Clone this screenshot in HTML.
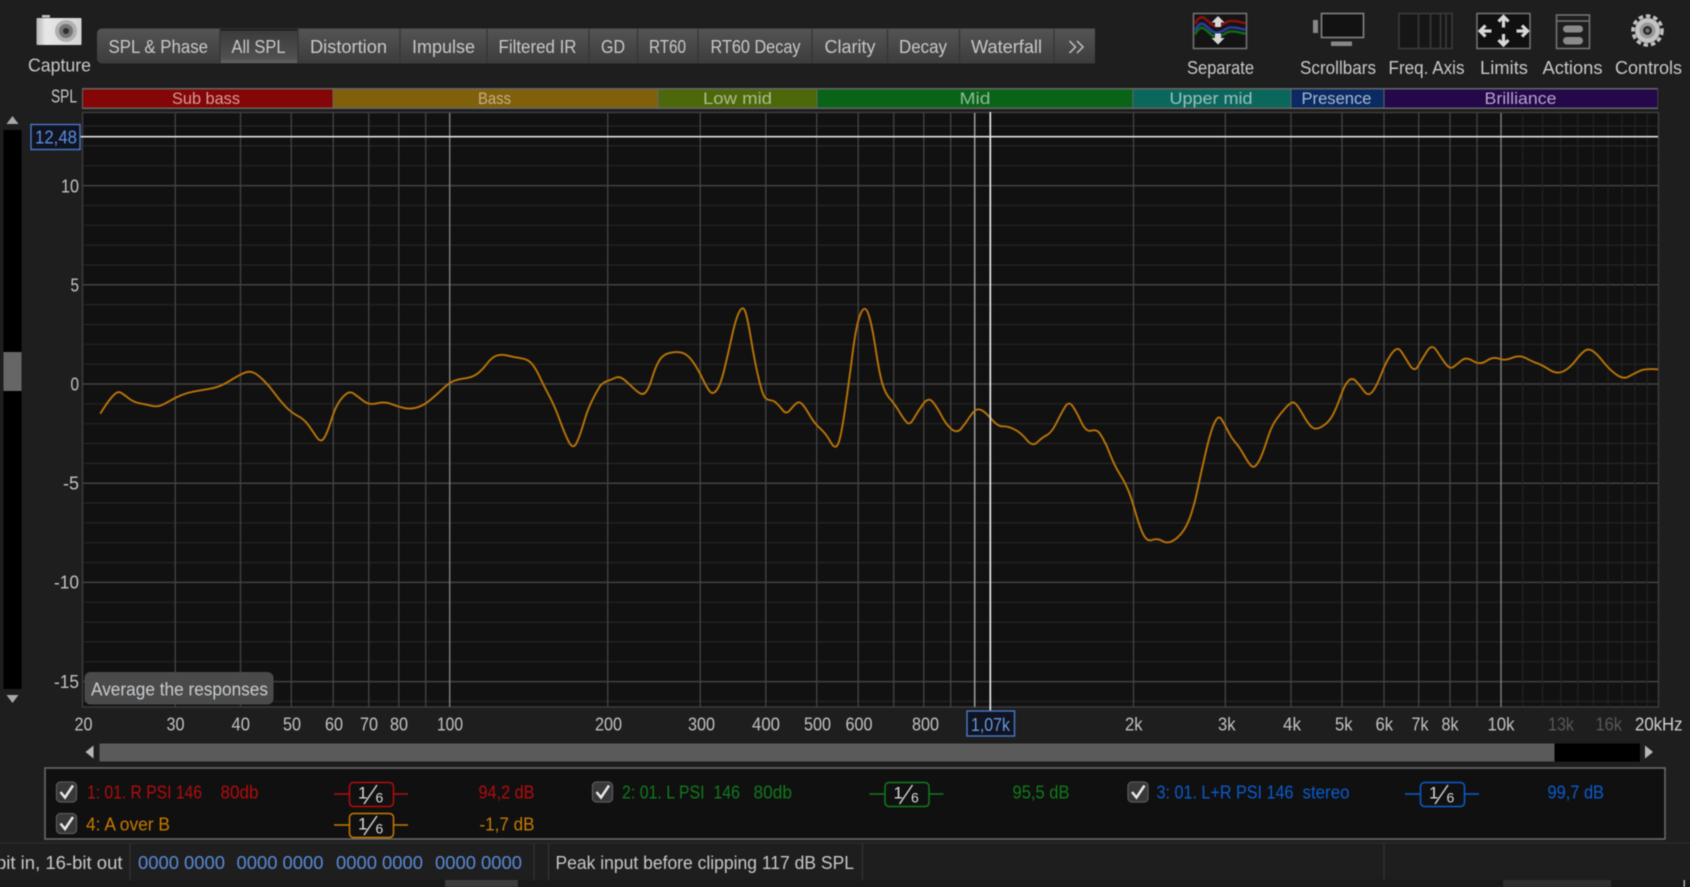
<!DOCTYPE html>
<html><head><meta charset="utf-8"><title>REW</title>
<style>
html,body{margin:0;padding:0;background:#1e1e1e;width:1690px;height:887px;overflow:hidden}
svg{display:block;filter:blur(.45px)}
text{font-family:"Liberation Sans",sans-serif;font-size:18px;fill:#c6c8ca}
.b{font-size:17px}
.f{fill:#c2c2c2}
</style></head><body>
<svg width="1690" height="887" viewBox="0 0 1690 887" xmlns="http://www.w3.org/2000/svg">
<defs>
<linearGradient id="tab" x1="0" y1="0" x2="0" y2="1"><stop offset="0" stop-color="#545454"/><stop offset="1" stop-color="#3c3c3c"/></linearGradient>
<linearGradient id="sel" x1="0" y1="0" x2="0" y2="1"><stop offset="0" stop-color="#3a3a3a"/><stop offset=".85" stop-color="#505050"/><stop offset="1" stop-color="#646464"/></linearGradient>
<linearGradient id="cam" x1="0" y1="0" x2="1" y2="0"><stop offset="0" stop-color="#b4b4b4"/><stop offset=".2" stop-color="#e8e8e8"/><stop offset="1" stop-color="#d4d4d4"/></linearGradient>
<clipPath id="plot"><rect x="82" y="113" width="1576" height="594"/></clipPath>
</defs>
<rect width="1690" height="887" fill="#1e1e1e"/>

<!-- Capture -->
<path d="M42 17.500v-2.500h8v2.500z" fill="#c0c0c0"/>
<rect x="36.500" y="18" width="45" height="27" rx="1" fill="url(#cam)"/>
<circle cx="66" cy="31" r="11" fill="#b0b0b0"/><circle cx="66" cy="31" r="7" fill="#747474"/><circle cx="66" cy="31" r="3" fill="#2a2e36"/>
<text x="28" y="71.500" textLength="63" lengthAdjust="spacingAndGlyphs">Capture</text>

<!-- Tabs -->
<path d="M102 28.500H1095V63.500H102a5 5 0 0 1-5-5V33.500a5 5 0 0 1 5-5z" fill="url(#tab)"/>
<rect x="220" y="29" width="78" height="34" fill="url(#sel)"/><rect x="220" y="29" width="78" height="1.500" fill="#161616"/>
<path d="M220 29v34M298 29v34M400 29v34M487 29v34M589 29v34M637.500 29v34M698 29v34M812 29v34M887.500 29v34M959.500 29v34M1054 29v34" stroke="#343434" stroke-width="1.200"/>
<text x="108.500" y="53" textLength="99.500" lengthAdjust="spacingAndGlyphs">SPL &amp; Phase</text>
<text x="231.500" y="53" textLength="54" lengthAdjust="spacingAndGlyphs">All SPL</text>
<text x="310" y="53" textLength="77" lengthAdjust="spacingAndGlyphs">Distortion</text>
<text x="412" y="53" textLength="63" lengthAdjust="spacingAndGlyphs">Impulse</text>
<text x="498.500" y="53" textLength="78" lengthAdjust="spacingAndGlyphs">Filtered IR</text>
<text x="601" y="53" textLength="24" lengthAdjust="spacingAndGlyphs">GD</text>
<text x="649" y="53" textLength="37" lengthAdjust="spacingAndGlyphs">RT60</text>
<text x="710.500" y="53" textLength="90" lengthAdjust="spacingAndGlyphs">RT60 Decay</text>
<text x="824.500" y="53" textLength="51" lengthAdjust="spacingAndGlyphs">Clarity</text>
<text x="899" y="53" textLength="48" lengthAdjust="spacingAndGlyphs">Decay</text>
<text x="971" y="53" textLength="71" lengthAdjust="spacingAndGlyphs">Waterfall</text>
<path d="M1069.500 41l6 6-6 6M1077 41l6 6-6 6" fill="none" stroke="#c0c0c0" stroke-width="1.500"/>

<!-- Separate icon -->
<rect x="1193.500" y="13.500" width="53" height="35" fill="#141414" stroke="#777" stroke-width="1.500"/>
<g fill="none" stroke-width="2.600">
<path d="M1195 28c3-6 6-8 9-6 5 3 8 9 14 8 6-1 9-6 15-5 5 0 9 2 13 2" stroke="#0f6a18" transform="translate(0,6.500)"/>
<path d="M1195 28c3-6 6-8 9-6 5 3 8 9 14 8 6-1 9-6 15-5 5 0 9 2 13 2" stroke="#2c3aa0" transform="translate(0,2.500)"/>
<path d="M1195 24c3-6 6-8 9-6 5 3 8 9 14 8 6-1 9-6 15-5 5 0 9 2 13 2" stroke="#8a0f10"/>
</g>
<path d="M1218 16l6.500 6.500h-3.500v4.500h-6v-4.500h-3.500zM1218 44.500l6.500-6.500h-3.500v-4.500h-6v4.500h-3.500z" fill="#d8d8d8"/>

<!-- Scrollbars icon -->
<rect x="1321.500" y="13.500" width="42" height="24" fill="#121212" stroke="#888" stroke-width="1.500"/>
<rect x="1313" y="20" width="5" height="13" fill="#888"/>
<rect x="1331" y="41.500" width="21" height="4.500" fill="#888"/>

<!-- Freq axis icon -->
<rect x="1399" y="13.500" width="53" height="35" fill="#161616" stroke="#3c3c3c" stroke-width="1.500"/>
<path d="M1418.500 13v35M1430.500 13v35M1440.500 13v35M1446 13v35" stroke="#3c3c3c" stroke-width="1.500"/>

<!-- Limits icon -->
<rect x="1477" y="13.500" width="53" height="35" fill="#101010" stroke="#777" stroke-width="1.500"/>
<g fill="none" stroke="#d8d8d8" stroke-width="3.200">
<path d="M1503.500 17.500v10M1498.500 21.500l5-5 5 5"/>
<path d="M1503.500 34v10M1498.500 40l5 5 5-5"/>
<path d="M1480.500 31h11M1485.500 25.500l-5.500 5.500 5.500 5.500"/>
<path d="M1516.500 31h11M1522 25.500l5.500 5.500-5.500 5.500"/>
</g>

<!-- Actions icon -->
<rect x="1556.500" y="15" width="33" height="33.500" fill="none" stroke="#777" stroke-width="1.500"/>
<path d="M1556 21h34" stroke="#777" stroke-width="1.500"/>
<rect x="1563" y="25.500" width="20" height="7" rx="3.500" fill="#8a8a8a"/>
<rect x="1563" y="37" width="20" height="7.500" rx="3.700" fill="#8a8a8a"/>

<!-- Gear icon -->
<circle cx="1647.500" cy="30.500" r="14.500" fill="none" stroke="#c0c0c0" stroke-width="3.500" stroke-dasharray="4.500 2.900"/>
<circle cx="1647.500" cy="30.500" r="12.500" fill="#c4c4c4"/>
<circle cx="1647.500" cy="30.500" r="8" fill="#999"/>
<circle cx="1647.500" cy="30.500" r="4.500" fill="#2a2a2a"/>
<circle cx="1647.500" cy="30.500" r="2" fill="#777"/>

<text x="1187" y="74" textLength="67" lengthAdjust="spacingAndGlyphs">Separate</text>
<text x="1300" y="74" textLength="76" lengthAdjust="spacingAndGlyphs">Scrollbars</text>
<text x="1388.500" y="74" textLength="76" lengthAdjust="spacingAndGlyphs">Freq. Axis</text>
<text x="1480" y="74" textLength="48" lengthAdjust="spacingAndGlyphs">Limits</text>
<text x="1542.500" y="74" textLength="60" lengthAdjust="spacingAndGlyphs">Actions</text>
<text x="1615" y="74" textLength="67" lengthAdjust="spacingAndGlyphs">Controls</text>

<!-- Band bar -->
<text x="51" y="102.500" textLength="26" lengthAdjust="spacingAndGlyphs">SPL</text>
<rect x="82" y="88" width="1576" height="21" fill="#666"/>
<rect x="83" y="89.500" width="249.500" height="18" fill="#850606"/>
<rect x="333.500" y="89.500" width="324" height="18" fill="#80600a"/>
<rect x="658.500" y="89.500" width="158" height="18" fill="#4c680a"/>
<rect x="817.500" y="89.500" width="315" height="18" fill="#0a6418"/>
<rect x="1133.500" y="89.500" width="157" height="18" fill="#0b665c"/>
<rect x="1291.500" y="89.500" width="92" height="18" fill="#0a2a62"/>
<rect x="1384.500" y="89.500" width="273" height="18" fill="#24084a"/>
<g>
<text class="b" x="172" y="104" textLength="68" lengthAdjust="spacingAndGlyphs" style="fill:#d49c9c">Sub bass</text>
<text class="b" x="478" y="104" textLength="33" lengthAdjust="spacingAndGlyphs" style="fill:#c4b088">Bass</text>
<text class="b" x="703" y="104" textLength="69" lengthAdjust="spacingAndGlyphs" style="fill:#aebc90">Low mid</text>
<text class="b" x="959.500" y="104" textLength="31" lengthAdjust="spacingAndGlyphs" style="fill:#90b898">Mid</text>
<text class="b" x="1169.500" y="104" textLength="83" lengthAdjust="spacingAndGlyphs" style="fill:#98c2bc">Upper mid</text>
<text class="b" x="1301.500" y="104" textLength="70" lengthAdjust="spacingAndGlyphs" style="fill:#a8b8d0">Presence</text>
<text class="b" x="1484.500" y="104" textLength="72" lengthAdjust="spacingAndGlyphs" style="fill:#b4a4c8">Brilliance</text>
</g>

<!-- Plot -->
<rect x="82.500" y="112.500" width="1576" height="594.500" fill="#111" stroke="#3c3c3c" stroke-width="1.500"/>
<path d="M83 126H1658M83 145.900H1658M83 165.700H1658M83 205.400H1658M83 225.300H1658M83 245.100H1658M83 265H1658M83 304.600H1658M83 324.500H1658M83 344.300H1658M83 364.200H1658M83 403.800H1658M83 423.700H1658M83 443.500H1658M83 463.400H1658M83 503H1658M83 522.900H1658M83 542.700H1658M83 562.600H1658M83 602.200H1658M83 622.100H1658M83 641.900H1658M83 661.800H1658M83 701.400H1658" stroke="#252525" stroke-width="1.200"/>
<path d="M83 185.600H1658M83 284.800H1658M83 384H1658M83 483.200H1658M83 582.400H1658M83 681.600H1658" stroke="#424242" stroke-width="1.500"/>
<path d="M1522.700 113V707M1542.500 113V707M1560.800 113V707M1577.700 113V707M1593.400 113V707M1608.100 113V707M1621.900 113V707M1634.900 113V707M1647.200 113V707" stroke="#242424" stroke-width="1.100"/>
<path d="M175.200 113V707M240.500 113V707M291.300 113V707M333.200 113V707M368.800 113V707M398.800 113V707M425.700 113V707M607.700 113V707M700.200 113V707M765.800 113V707M816.700 113V707M858.200 113V707M893.700 113V707M923.800 113V707M950.700 113V707M1133.500 113V707M1225.300 113V707M1291 113V707M1342 113V707M1384 113V707M1418.700 113V707M1450 113V707M1477 113V707" stroke="#444" stroke-width="1.300"/>
<path d="M449.700 113V707M1501 113V707" stroke="#808080" stroke-width="1.400"/>
<path d="M974.700 113V707" stroke="#a0a0a0" stroke-width="1.500"/>

<g clip-path="url(#plot)" fill="none" stroke="#b87408" stroke-width="1.900" stroke-linejoin="round" stroke-linecap="round">
<path vector-effect="non-scaling-stroke" transform="translate(0,280) scale(0.3827,0.3333)" d="M263,399 L274,379.500 Q285,360 296.500,346 Q308,332 316.500,338.500 Q325,345 337.500,356 Q350,367 365,370 Q380,373 395,377 Q410,381 420,376.500 Q430,372 444,362.500 Q458,353 474,345.500 Q490,338 507.500,334.500 Q525,331 545,327 Q565,323 577.500,316.500 Q590,310 607.500,297.500 Q625,285 638.500,278.500 Q652,272 663.500,278.500 Q675,285 690,302.500 Q705,320 717.500,340 Q730,360 745,378.500 Q760,397 777.500,407.500 Q795,418 805,434 Q815,450 826.500,470 Q838,490 846.500,475 Q855,460 865,422.500 Q875,385 885,367.500 Q895,350 905,341.500 Q915,333 925,341.500 Q935,350 950,363 Q965,376 985,370 Q1005,364 1022.500,372 Q1040,380 1055,384 Q1070,388 1087.500,383 Q1105,378 1122.500,361.500 Q1140,345 1157.500,326 Q1175,307 1187.500,302 Q1200,297 1217.500,294.500 Q1235,292 1247.500,281 Q1260,270 1272.500,251 Q1285,232 1297.500,227 Q1310,222 1327.500,227 Q1345,232 1362.500,235 Q1380,238 1390,251.500 Q1400,265 1410,290 Q1420,315 1435,347.500 Q1450,380 1462.500,420 Q1475,460 1486,485 Q1497,510 1506,490 Q1515,470 1527.500,420 Q1540,370 1568,318"/>
<path vector-effect="non-scaling-stroke" transform="translate(600,280) scale(0.3827,0.3333)" d="M0,318 L6,311.500 Q12,305 21,302 Q30,299 40,293.500 Q50,288 60,296.500 Q70,305 80,316.500 Q90,328 101,337.500 Q112,347 120,336 Q128,325 136.500,292.500 Q145,260 155,241 Q165,222 185,218 Q205,214 217.500,219.500 Q230,225 242.500,245 Q255,265 267.500,295 Q280,325 287.500,335 Q295,345 305,330 Q315,315 325,267.500 Q335,220 345,167.500 Q355,115 364,95.500 Q373,76 379,93 Q385,110 395,180 Q405,250 415,297.500 Q425,345 431,352.500 Q437,360 446,361 Q455,362 462.500,371 Q470,380 478.500,392 Q487,404 496,391 Q505,378 512.500,370.500 Q520,363 527.500,371.500 Q535,380 547.500,405 Q560,430 575,445 Q590,460 602.500,486 Q615,512 622.500,491 Q630,470 640,390 Q650,310 660,220 Q670,130 681,101 Q692,72 701,101 Q710,130 720,205 Q730,280 737.500,310 Q745,340 757.500,356 Q770,372 782.500,396 Q795,420 802.500,428 Q810,436 820,415.500 Q830,395 844,372.500 Q858,350 869,365 Q880,380 892.500,407.500 Q905,435 919,448 Q933,461 944,445.500 Q955,430 965,412.500 Q975,395 982.500,390 Q990,385 1000,392.500 Q1010,400 1025,420 Q1040,440 1052.500,439 Q1065,438 1082.500,448 Q1100,458 1115,479.500 Q1130,501 1142.500,487 Q1155,473 1167.500,465.500 Q1180,458 1192.500,429 Q1205,400 1215,381 Q1225,362 1235,378.500 Q1245,395 1257.500,426 Q1270,457 1284,452 Q1298,447 1306.500,461 Q1315,475 1321,492"/>
<path vector-effect="non-scaling-stroke" transform="translate(1100,320) scale(0.3762,0.3333)" d="M15,370 L27.500,405 Q40,440 54,465 Q68,490 76.500,515 Q85,540 95,580 Q105,620 115,643 Q125,666 138.500,660 Q152,654 167.500,664 Q183,674 204,654.500 Q225,635 237.500,597.500 Q250,560 260,505 Q270,450 282.500,390 Q295,330 305,307 Q315,284 322.500,297 Q330,310 340,332.500 Q350,355 360,367.500 Q370,380 382.500,405 Q395,430 402.500,438 Q410,446 420,428 Q430,410 442.500,365 Q455,320 467.500,300 Q480,280 495,261.500 Q510,243 517.500,249 Q525,255 540,285 Q555,315 565,323 Q575,331 592.500,318 Q610,305 620,282.500 Q630,260 640,227.500 Q650,195 660,183 Q670,171 680,183 Q690,195 701.500,213 Q713,231 724,215.500 Q735,200 747.500,162.500 Q760,125 775,101 Q790,77 800,93.500 Q810,110 822.500,134 Q835,158 845,139 Q855,120 868.500,95 Q882,70 893.500,90 Q905,110 917.500,129.500 Q930,149 940,140.500 Q950,132 961.500,121 Q973,110 991.500,123 Q1010,136 1027.500,122.500 Q1045,109 1060,116 Q1075,123 1095,113.500 Q1115,104 1132.500,114.500 Q1150,125 1162.500,130 Q1175,135 1195,149.500 Q1215,164 1232.500,153.500 Q1250,143 1262.500,124 Q1275,105 1286,94.500 Q1297,84 1308.500,92 Q1320,100 1337.500,125 Q1355,150 1373.500,164.500 Q1392,179 1406,169.500 Q1420,160 1435,152.500 Q1450,145 1483,148"/>
</g>

<!-- Cursor -->
<path d="M80 136.700H1658" stroke="#e0e0e0" stroke-width="1.700"/>
<path d="M990.300 112V711" stroke="#e8e8e8" stroke-width="1.700"/>
<rect x="31" y="124.500" width="49" height="25" fill="#101420" stroke="#4a78c8" stroke-width="1.400"/>
<text x="35" y="143.500" textLength="42" lengthAdjust="spacingAndGlyphs" style="fill:#5a8ee0">12,48</text>
<rect x="967" y="711" width="47.500" height="25" fill="#101420" stroke="#4a78c8" stroke-width="1.400"/>
<text x="971" y="731" textLength="39" lengthAdjust="spacingAndGlyphs" style="fill:#6a96de">1,07k</text>

<!-- Y axis -->
<g>
<text class="f" x="61" y="192.500" textLength="18" lengthAdjust="spacingAndGlyphs">10</text>
<text class="f" x="70.500" y="291.500" textLength="8.500" lengthAdjust="spacingAndGlyphs">5</text>
<text class="f" x="70.500" y="390.500" textLength="8.500" lengthAdjust="spacingAndGlyphs">0</text>
<text class="f" x="63" y="489.500" textLength="16" lengthAdjust="spacingAndGlyphs">-5</text>
<text class="f" x="54" y="588.500" textLength="25" lengthAdjust="spacingAndGlyphs">-10</text>
<text class="f" x="54" y="688" textLength="25" lengthAdjust="spacingAndGlyphs">-15</text>
</g>

<!-- left scrollbar -->
<rect x="3.500" y="130" width="18" height="559" fill="#000"/>
<rect x="3.500" y="352" width="18" height="39" fill="#666"/>
<path d="M12.500 116l6 8h-12zM12.500 703l6-8h-12z" fill="#a8a8a8"/>

<!-- Average button -->
<rect x="84.500" y="672" width="189" height="32.500" rx="6" fill="#4a4a4a"/>
<text x="91" y="695.500" textLength="177" lengthAdjust="spacingAndGlyphs" style="fill:#c8ccd0">Average the responses</text>

<!-- X axis labels -->
<g>
<text class="f" x="74.500" y="730.500" textLength="18" lengthAdjust="spacingAndGlyphs">20</text>
<text class="f" x="166.500" y="730.500" textLength="18" lengthAdjust="spacingAndGlyphs">30</text>
<text class="f" x="231.500" y="730.500" textLength="18.500" lengthAdjust="spacingAndGlyphs">40</text>
<text class="f" x="283" y="730.500" textLength="18" lengthAdjust="spacingAndGlyphs">50</text>
<text class="f" x="325" y="730.500" textLength="18" lengthAdjust="spacingAndGlyphs">60</text>
<text class="f" x="360" y="730.500" textLength="18" lengthAdjust="spacingAndGlyphs">70</text>
<text class="f" x="390" y="730.500" textLength="18" lengthAdjust="spacingAndGlyphs">80</text>
<text class="f" x="437" y="730.500" textLength="26" lengthAdjust="spacingAndGlyphs">100</text>
<text class="f" x="595" y="730.500" textLength="27" lengthAdjust="spacingAndGlyphs">200</text>
<text class="f" x="688" y="730.500" textLength="27" lengthAdjust="spacingAndGlyphs">300</text>
<text class="f" x="752" y="730.500" textLength="28" lengthAdjust="spacingAndGlyphs">400</text>
<text class="f" x="804" y="730.500" textLength="27" lengthAdjust="spacingAndGlyphs">500</text>
<text class="f" x="845.500" y="730.500" textLength="27" lengthAdjust="spacingAndGlyphs">600</text>
<text class="f" x="912" y="730.500" textLength="27" lengthAdjust="spacingAndGlyphs">800</text>
<text class="f" x="1125" y="730.500" textLength="17.500" lengthAdjust="spacingAndGlyphs">2k</text>
<text class="f" x="1218" y="730.500" textLength="17.500" lengthAdjust="spacingAndGlyphs">3k</text>
<text class="f" x="1283" y="730.500" textLength="18" lengthAdjust="spacingAndGlyphs">4k</text>
<text class="f" x="1335" y="730.500" textLength="17.500" lengthAdjust="spacingAndGlyphs">5k</text>
<text class="f" x="1375.500" y="730.500" textLength="17.500" lengthAdjust="spacingAndGlyphs">6k</text>
<text class="f" x="1411.500" y="730.500" textLength="17" lengthAdjust="spacingAndGlyphs">7k</text>
<text class="f" x="1441.500" y="730.500" textLength="17" lengthAdjust="spacingAndGlyphs">8k</text>
<text class="f" x="1487.500" y="730.500" textLength="27" lengthAdjust="spacingAndGlyphs">10k</text>
<text x="1548" y="730.500" textLength="26" lengthAdjust="spacingAndGlyphs" style="fill:#585858">13k</text>
<text x="1595.500" y="730.500" textLength="26.500" lengthAdjust="spacingAndGlyphs" style="fill:#585858">16k</text>
<text x="1635" y="730.500" textLength="47.500" lengthAdjust="spacingAndGlyphs" style="fill:#d0d0d0">20kHz</text>
</g>

<!-- Horizontal scrollbar -->
<path d="M85.500 752l8-6.500v13z" fill="#b8b8b8"/>
<rect x="99.500" y="743.500" width="1455" height="18" fill="#5a5a5a"/>
<rect x="1554.500" y="743.500" width="85.500" height="18" fill="#000"/>
<path d="M1653 752l-8-6.500v13z" fill="#b8b8b8"/>

<!-- Legend -->
<rect x="45" y="768" width="1620" height="71" fill="#101010" stroke="#6c6c6c" stroke-width="1.500"/>
<g fill="#383838" stroke="#585858" stroke-width="1.300">
<rect x="56.500" y="782" width="20" height="20" rx="4"/>
<rect x="56.500" y="813.500" width="20" height="20" rx="4"/>
<rect x="592.500" y="782" width="20" height="20" rx="4"/>
<rect x="1128" y="782" width="20" height="20" rx="4"/>
</g>
<g fill="none" stroke="#e8e8e8" stroke-width="2.500">
<path d="M60.500 792l4.500 5.500 8-12"/>
<path d="M60.500 823.500l4.500 5.500 8-12"/>
<path d="M596.500 792l4.500 5.500 8-12"/>
<path d="M1132 792l4.500 5.500 8-12"/>
</g>
<text x="87" y="798.500" textLength="115" lengthAdjust="spacingAndGlyphs" style="fill:#b40c0c">1: 01. R PSI 146</text>
<text x="220.500" y="798.500" textLength="38" lengthAdjust="spacingAndGlyphs" style="fill:#b40c0c">80db</text>
<text x="478.500" y="798.500" textLength="56" lengthAdjust="spacingAndGlyphs" style="fill:#b40c0c">94,2 dB</text>
<text x="86" y="830.500" textLength="84" lengthAdjust="spacingAndGlyphs" style="fill:#c87a00">4: A over B</text>
<text x="479.500" y="830.500" textLength="55" lengthAdjust="spacingAndGlyphs" style="fill:#c87a00">-1,7 dB</text>
<text x="622" y="798.500" textLength="118" lengthAdjust="spacingAndGlyphs" xml:space="preserve" style="fill:#107a1c;white-space:pre">2: 01. L PSI  146</text>
<text x="753.500" y="798.500" textLength="38.500" lengthAdjust="spacingAndGlyphs" style="fill:#107a1c">80db</text>
<text x="1012.500" y="798.500" textLength="57" lengthAdjust="spacingAndGlyphs" style="fill:#107a1c">95,5 dB</text>
<text x="1156.500" y="798.500" textLength="137" lengthAdjust="spacingAndGlyphs" style="fill:#0a5cd0">3: 01. L+R PSI 146</text>
<text x="1302.500" y="798.500" textLength="47" lengthAdjust="spacingAndGlyphs" style="fill:#0a5cd0">stereo</text>
<text x="1547.500" y="798.500" textLength="56.500" lengthAdjust="spacingAndGlyphs" style="fill:#0a5cd0">99,7 dB</text>

<!-- Smoothing pills -->
<g transform="translate(349,782)">
<path d="M-15 12H0M45 12H59" stroke="#b40c0c" stroke-width="1.500"/><rect x=".5" y=".5" width="44" height="24" rx="4" fill="#101010" stroke="#b40c0c" stroke-width="1.500"/>
<text x="9" y="16.500" style="font-size:17px;fill:#d8d8d8">1</text><path d="M28 3L15 22" stroke="#d0d0d0" stroke-width="1.500"/><text x="26.500" y="20.500" style="font-size:14px;fill:#d8d8d8">6</text>
</g>
<g transform="translate(349,813)">
<path d="M-15 12H0M45 12H59" stroke="#c87a00" stroke-width="1.500"/><rect x=".5" y=".5" width="44" height="24" rx="4" fill="#101010" stroke="#c87a00" stroke-width="1.500"/>
<text x="9" y="16.500" style="font-size:17px;fill:#d8d8d8">1</text><path d="M28 3L15 22" stroke="#d0d0d0" stroke-width="1.500"/><text x="26.500" y="20.500" style="font-size:14px;fill:#d8d8d8">6</text>
</g>
<g transform="translate(884.500,782)">
<path d="M-15 12H0M45 12H59" stroke="#107a1c" stroke-width="1.500"/><rect x=".5" y=".5" width="44" height="24" rx="4" fill="#101010" stroke="#107a1c" stroke-width="1.500"/>
<text x="9" y="16.500" style="font-size:17px;fill:#d8d8d8">1</text><path d="M28 3L15 22" stroke="#d0d0d0" stroke-width="1.500"/><text x="26.500" y="20.500" style="font-size:14px;fill:#d8d8d8">6</text>
</g>
<g transform="translate(1420,782)">
<path d="M-15 12H0M45 12H59" stroke="#0a5cd0" stroke-width="1.500"/><rect x=".5" y=".5" width="44" height="24" rx="4" fill="#101010" stroke="#0a5cd0" stroke-width="1.500"/>
<text x="9" y="16.500" style="font-size:17px;fill:#d8d8d8">1</text><path d="M28 3L15 22" stroke="#d0d0d0" stroke-width="1.500"/><text x="26.500" y="20.500" style="font-size:14px;fill:#d8d8d8">6</text>
</g>

<!-- Status bar -->
<path d="M0 843H1690" stroke="#2e2e2e" stroke-width="1.300"/>
<path d="M130 843V880M534 843V880M548.500 843V880M862.500 843V880M1384 843V880" stroke="#343434" stroke-width="1.200"/>
<text x="-4" y="869" textLength="126.500" lengthAdjust="spacingAndGlyphs">bit in, 16-bit out</text>
<text x="138" y="869" textLength="87" lengthAdjust="spacingAndGlyphs" style="fill:#5a8ad8">0000 0000</text>
<text x="236.500" y="869" textLength="87" lengthAdjust="spacingAndGlyphs" style="fill:#5a8ad8">0000 0000</text>
<text x="336" y="869" textLength="87" lengthAdjust="spacingAndGlyphs" style="fill:#5a8ad8">0000 0000</text>
<text x="435" y="869" textLength="87" lengthAdjust="spacingAndGlyphs" style="fill:#5a8ad8">0000 0000</text>
<text x="555.500" y="869" textLength="298.500" lengthAdjust="spacingAndGlyphs">Peak input before clipping 117 dB SPL</text>

<!-- Bottom strip -->
<rect x="0" y="880" width="1690" height="7" fill="#181818"/>
<rect x="445" y="880" width="73" height="7" fill="#3c3c3c"/>
<rect x="1503" y="880" width="108" height="7" fill="#2e2e2e"/>
<rect x="1683.500" y="880" width="1.500" height="7" fill="#aaa"/>
</svg>
</body></html>
